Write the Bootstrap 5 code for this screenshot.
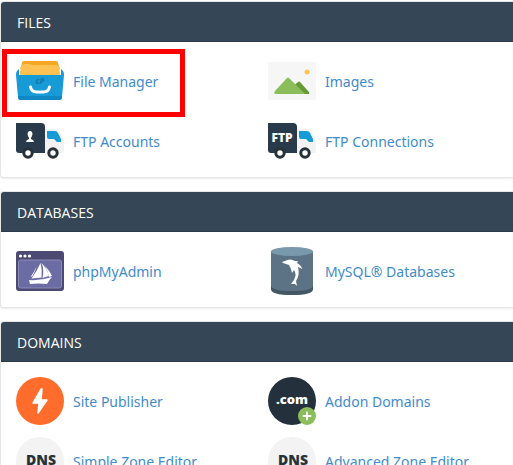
<!DOCTYPE html>
<html lang="en">
<head>
<meta charset="utf-8">
<meta name="viewport" content="width=device-width, initial-scale=1">
<title>Control Panel</title>
<link href="https://cdn.jsdelivr.net/npm/bootstrap@5.3.0/dist/css/bootstrap.min.css" rel="stylesheet">
<style>
body { font-family: "Open Sans", "Noto Sans", sans-serif; font-size: 14px; line-height: 20px; }
main { padding-top: 1px; }
.tool-panel { border: 1px solid #e6e6e6; border-right: 0; border-radius: 4px 0 0 4px; box-shadow: 0 1px 2px rgba(0,0,0,.08); margin-bottom: 13px; }
.panel-title { background: #354656; color: #fff; height: 40px; padding: 2px 16px 0; border-bottom: 1px solid #293a4a; border-radius: 3px 0 0 0; font-size: 14px; line-height: 20px; }
.tool-grid { padding: 15px 8px 12px 0; row-gap: 12px; }
.tool-item { padding-left: 15px; }
.tool-item a { color: #428bca; gap: 9px; height: 48px; font-family: "Noto Sans", "Open Sans", sans-serif; line-height: 20px; }
.tool-item a > span:not(.marker) { padding-top: 2px; }
.tool-item svg { width: 48px; height: 48px; flex: none; }
.marker { position: absolute; left: -14px; top: -8px; width: 183px; height: 68px; border: 5px solid #f00; pointer-events: none; }
.icon-label { font-family: "Open Sans", sans-serif; font-weight: 800; text-anchor: middle; }
</style>
<script src="https://cdn.jsdelivr.net/npm/bootstrap@5.3.0/dist/js/bootstrap.bundle.min.js"></script>
</head>
<body class="bg-white vh-100 overflow-hidden">
<main>
<section class="tool-panel bg-white">
  <h2 class="panel-title d-flex align-items-center mb-0 fw-normal">FILES</h2>
  <div class="tool-grid row g-0">
    <div class="tool-item col-6 d-flex">
      <a href="#" class="position-relative d-flex align-items-center text-decoration-none">
        <svg viewBox="0 0 48 48" aria-hidden="true"><path d="M6 6q0-2 2-2h32q2 0 2 2l2 6H4z" fill="#f5a623"/><path d="M5 9q1-2 3-2h5q2 0 3 1h24q2 0 3 2l2 12H3z" fill="#ffc152"/><path d="M1 14l2-2v6h42v-6l2 2q1 1 1 4l-2 22q0 3-3 3H5q-3 0-3-3L0 18q0-3 1-4z" fill="#179bd7"/><path d="M2 39h44v1q0 3-3 3H5q-3 0-3-3z" fill="#1188c4"/><text x="24" y="27" class="icon-label" font-size="8" fill="#147aae" font-style="italic">cP</text><path d="M14.500 30q1 5 6 5h7q5 0 6-5" fill="none" stroke="#fff" stroke-width="3" stroke-linecap="round"/></svg>
        <span>File Manager</span><span class="marker"></span>
      </a>
    </div>
    <div class="tool-item col-6 d-flex">
      <a href="#" class="d-flex align-items-center text-decoration-none">
        <svg viewBox="0 0 48 48" aria-hidden="true"><rect y="5" width="48" height="38" rx="2" fill="#f6f6f6"/><circle cx="39" cy="15" r="2.5" fill="#ffc152"/><path d="M23 31l7-6q1-1 2 0l9 10q1 2-1 2H29z" fill="#689a37"/><path d="M7 34l12-13q1-1 2 0l16 16H8q-3 0-1-3z" fill="#8bbd5b"/></svg>
        <span>Images</span>
      </a>
    </div>
    <div class="tool-item col-6 d-flex">
      <a href="#" class="d-flex align-items-center text-decoration-none">
        <svg viewBox="0 0 48 48" aria-hidden="true"><path d="M31 12h9q2 0 3 2l4 8q1 1 1 3v9q0 2-2 2H28V12z" fill="#f2f2f2"/><path d="M0 6h25q4 0 4 4v26H3q-3 0-3-3z" fill="#293a4a"/><path d="M31 14h8q2 0 3 2l3 6v3h-4l-3-3h-5q-2 0-2-2z" fill="#179bd7"/><g fill="#fff" stroke="#263238" stroke-width="3"><circle cx="12" cy="36" r="4.200"/><circle cx="37" cy="36" r="4.200"/></g><path d="M12 15q2-2 4 0 1 2 0 4l-1 2v1q3 1 3 3H10q0-2 3-3v-1l-1-2q-1-2 0-4z" fill="#fff"/></svg>
        <span>FTP Accounts</span>
      </a>
    </div>
    <div class="tool-item col-6 d-flex">
      <a href="#" class="d-flex align-items-center text-decoration-none">
        <svg viewBox="0 0 48 48" aria-hidden="true"><path d="M31 12h9q2 0 3 2l4 8q1 1 1 3v9q0 2-2 2H28V12z" fill="#f2f2f2"/><path d="M0 6h25q4 0 4 4v26H3q-3 0-3-3z" fill="#293a4a"/><path d="M31 14h8q2 0 3 2l3 6v3h-4l-3-3h-5q-2 0-2-2z" fill="#179bd7"/><g fill="#fff" stroke="#263238" stroke-width="3"><circle cx="12" cy="36" r="4.200"/><circle cx="37" cy="36" r="4.200"/></g><text x="14" y="25" class="icon-label" font-size="12" fill="#fff">FTP</text></svg>
        <span>FTP Connections</span>
      </a>
    </div>
  </div>
</section>
<section class="tool-panel bg-white">
  <h2 class="panel-title d-flex align-items-center mb-0 fw-normal">DATABASES</h2>
  <div class="tool-grid row g-0">
    <div class="tool-item col-6 d-flex">
      <a href="#" class="d-flex align-items-center text-decoration-none">
        <svg viewBox="0 0 48 48" aria-hidden="true"><rect y="4" width="48" height="40" rx="3" fill="#4c4a73"/><rect x="2.500" y="13" width="43" height="28" rx="2" fill="#6c6ca5" stroke="#8b8bb8"/><g fill="#fff"><circle cx="4.500" cy="9" r="1.600"/><circle cx="9" cy="9" r="1.600"/><circle cx="13.500" cy="9" r="1.600"/><path d="M24.500 16q-4 9-9 15.500l10-1q1-7-1-14.500zM20.500 19q-2 6-6 11l2-1q3-5 4-10zM25.500 16q6 6 7 13l-6 2q2-8-1-15zM29 19q5 5 7 10l-3 1q-1-6-4-11zM13 33q11 1 23-3-3 3-5 7-9-1-17 0z"/></g></svg>
        <span>phpMyAdmin</span>
      </a>
    </div>
    <div class="tool-item col-6 d-flex">
      <a href="#" class="d-flex align-items-center text-decoration-none">
        <svg viewBox="0 0 48 48" aria-hidden="true"><path d="M3 36v6q0 6 21 6t21-6v-6z" fill="#435663"/><path d="M3 4v34q0 6 21 6t21-6V4z" fill="#5b7385"/><ellipse cx="24" cy="4.500" rx="21" ry="4.500" fill="#7a98ab"/><path d="M14 15l3-1q5-3 10 0 1 0 3 0l-1 2q5 3 5 6l-4-2q2 8-2 14l1 5-2-2-4 0 3-4q3-6 0-10l-2 3-1-4-2-4-6-2z" fill="#fff"/></svg>
        <span>MySQL® Databases</span>
      </a>
    </div>
  </div>
</section>
<section class="tool-panel bg-white">
  <h2 class="panel-title d-flex align-items-center mb-0 fw-normal">DOMAINS</h2>
  <div class="tool-grid row g-0">
    <div class="tool-item col-6 d-flex">
      <a href="#" class="d-flex align-items-center text-decoration-none">
        <svg viewBox="0 0 48 48" aria-hidden="true"><circle cx="24" cy="24" r="24" fill="#ff6c2c"/><path d="M25 12l-8 14h6l-1 10 9-13h-6l1-11z" fill="#fff" stroke="#fff" stroke-width="1.500" stroke-linejoin="round"/></svg>
        <span>Site Publisher</span>
      </a>
    </div>
    <div class="tool-item col-6 d-flex">
      <a href="#" class="d-flex align-items-center text-decoration-none">
        <svg viewBox="0 0 48 48" aria-hidden="true"><circle cx="24" cy="24" r="24" fill="#24303c"/><text x="24" y="27" class="icon-label" font-size="13" fill="#fff">.com</text><circle cx="39" cy="39" r="9" fill="#8bbd5b"/><path d="M39 35.500v7M35.500 39h7" stroke="#fff" stroke-width="2" stroke-linecap="round"/></svg>
        <span>Addon Domains</span>
      </a>
    </div>
    <div class="tool-item col-6 d-flex">
      <a href="#" class="d-flex align-items-center text-decoration-none">
        <svg viewBox="0 0 48 48" aria-hidden="true"><circle cx="24" cy="24" r="24" fill="#f3f3f3"/><text x="25" y="28" class="icon-label" font-size="14" fill="#263238">DNS</text></svg>
        <span>Simple Zone Editor</span>
      </a>
    </div>
    <div class="tool-item col-6 d-flex">
      <a href="#" class="d-flex align-items-center text-decoration-none">
        <svg viewBox="0 0 48 48" aria-hidden="true"><circle cx="24" cy="24" r="24" fill="#f3f3f3"/><text x="25" y="28" class="icon-label" font-size="14" fill="#263238">DNS</text></svg>
        <span>Advanced Zone Editor</span>
      </a>
    </div>
  </div>
</section>
</main>
</body>
</html>
